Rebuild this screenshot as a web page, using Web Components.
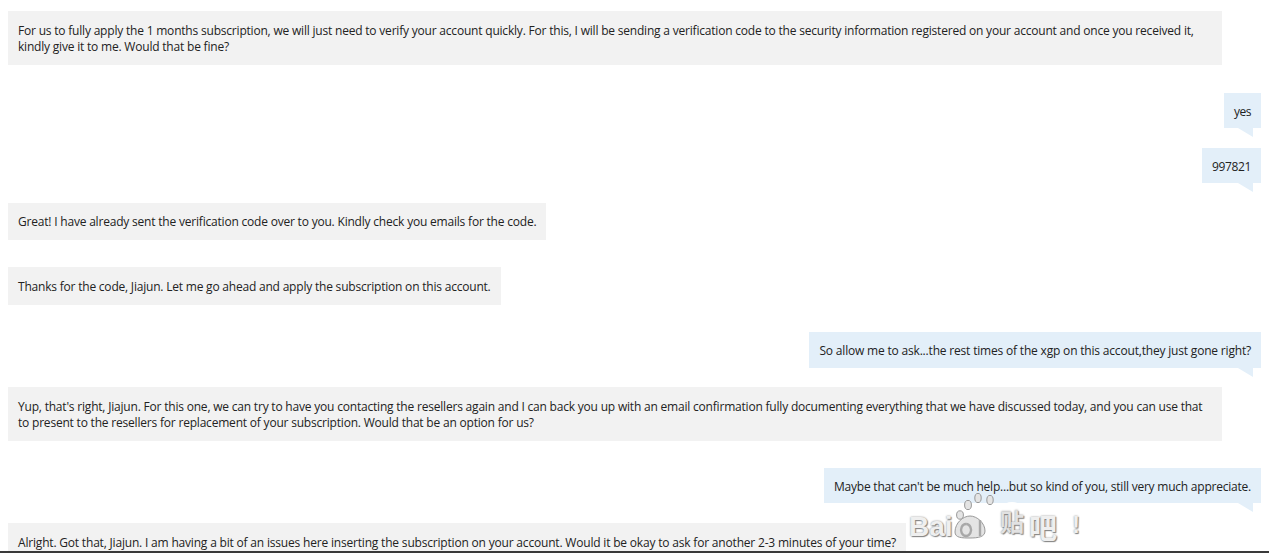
<!DOCTYPE html>
<html><head><meta charset="utf-8"><style>
html,body{margin:0;height:553px;overflow:hidden;background:#fff}
</style></head><body>
<chat-log>
<chat-msg side="in" style="--top:11px;--pt:12px;--pb:10px">For us to fully apply the 1 months subscription, we will just need to verify your account quickly. For this, I will be sending a verification code to the security information registered on your account and once you received it, kindly give it to me. Would that be fine?</chat-msg>
<chat-msg side="out" style="--top:28px;--ls:-.5px">yes</chat-msg>
<chat-msg side="out" style="--top:20px;--ls:-.36px">997821</chat-msg>
<chat-msg side="in" style="--top:20px;--pt:11px;--pb:10px">Great! I have already sent the verification code over to you. Kindly check you emails for the code.</chat-msg>
<chat-msg side="in" style="--top:27px;--pt:12px;--pb:10px;--ls:-.205px">Thanks for the code, Jiajun. Let me go ahead and apply the subscription on this account.</chat-msg>
<chat-msg side="out" style="--top:27px;--pt:11px;--pb:9px;--ls:-.185px">So allow me to ask...the rest times of the xgp on this accout,they just gone right?</chat-msg>
<chat-msg side="in" style="--top:19px;--pt:12px;--pb:10px">Yup, that's right, Jiajun. For this one, we can try to have you contacting the resellers again and I can back you up with an email confirmation fully documenting everything that we have discussed today, and you can use that to present to the resellers for replacement of your subscription. Would that be an option for us?</chat-msg>
<chat-msg side="out" style="--top:27px;--ls:-.225px">Maybe that can't be much help...but so kind of you, still very much appreciate.</chat-msg>
<chat-msg side="in" style="--top:20px;--pt:12px;--pb:9px;--ls:-.188px">Alright. Got that, Jiajun. I am having a bit of an issues here inserting the subscription on your account. Would it be okay to ask for another 2-3 minutes of your time?</chat-msg>
</chat-log>
<baidu-mark></baidu-mark>
<script>
const mk=(html)=>{const t=document.createElement('template');t.innerHTML=html;return t};
const logT=mk(`<style>:host{display:flex;flex-direction:column;height:553px;box-sizing:border-box;border-bottom:2px solid #3a3a3a;overflow:hidden;padding:0 8px;font:12px/16px "Open Sans","Noto Sans",sans-serif;color:#222}</style><slot></slot>`);
const msgT=mk(`<style>
:host{display:flex;flex:none;margin-top:var(--top,0);letter-spacing:var(--ls,-.2px)}
:host([side=out]){justify-content:flex-end}
.b{position:relative;box-sizing:border-box;padding:var(--pt,11px) 10px var(--pb,8px);background:#f2f2f2;max-width:1214px}
:host([side=out]) .b{background:#e3eff9}
:host([side=out]) .b::after{content:"";position:absolute;right:8px;top:100%;width:0;height:0;border-top:9px solid #e3eff9;border-left:15px solid transparent}
</style><div class="b"><slot></slot></div>`);
const markT=mk(`<style>
:host{position:absolute;left:905px;top:486px;width:180px;height:56px;display:block;pointer-events:none;color:#efefef;text-shadow:0 0 2px #8a8a8a,1px 1px 1px #808080;white-space:nowrap}
span{position:absolute}
.bai{left:4px;top:25px;font:bold 28px/32px "Liberation Sans",sans-serif}
.cjk{font:bold 28px/32px "Noto Sans CJK SC",sans-serif}
.ba{left:124px;top:25px}
.ex{left:167px;top:25px;font:bold 24px/28px "Liberation Sans",sans-serif}
.disc{left:90px;top:16px;width:34px;height:38px;border-radius:50%;background:rgba(255,255,255,.95);display:flex;align-items:center;justify-content:center;font-size:24px}
.tie{position:static;color:#e2e2e2}
svg{position:absolute;left:0;top:0}
</style><svg width="100" height="56" viewBox="0 0 100 56"><g fill="#e4e4e4" stroke="#999" stroke-width="1"><ellipse cx="55" cy="29" rx="3.4" ry="4.2"/><ellipse cx="63" cy="19" rx="3.4" ry="4.6"/><ellipse cx="73" cy="12" rx="3.2" ry="4.6"/><ellipse cx="85" cy="14" rx="3.2" ry="4.6"/><path d="M50 46c0-9 8-16 15-16s15 7 15 15c0 6-7 7-15 7s-15 0-15-6z"/></g><path d="M61 38a5 6 0 1 0 .1 0M75 34v16" fill="none" stroke="#a8a8a8" stroke-width="2.4"/></svg>
<span class="bai">Bai</span><span class="disc cjk"><span class="tie">贴</span></span><span class="ba cjk">吧</span><span class="ex">!</span>`);
customElements.define('chat-log',class extends HTMLElement{constructor(){super();this.attachShadow({mode:'open'}).append(logT.content.cloneNode(true))}});
customElements.define('chat-msg',class extends HTMLElement{constructor(){super();this.attachShadow({mode:'open'}).append(msgT.content.cloneNode(true))}});
customElements.define('baidu-mark',class extends HTMLElement{constructor(){super();this.attachShadow({mode:'open'}).append(markT.content.cloneNode(true))}});
</script>
</body></html>
